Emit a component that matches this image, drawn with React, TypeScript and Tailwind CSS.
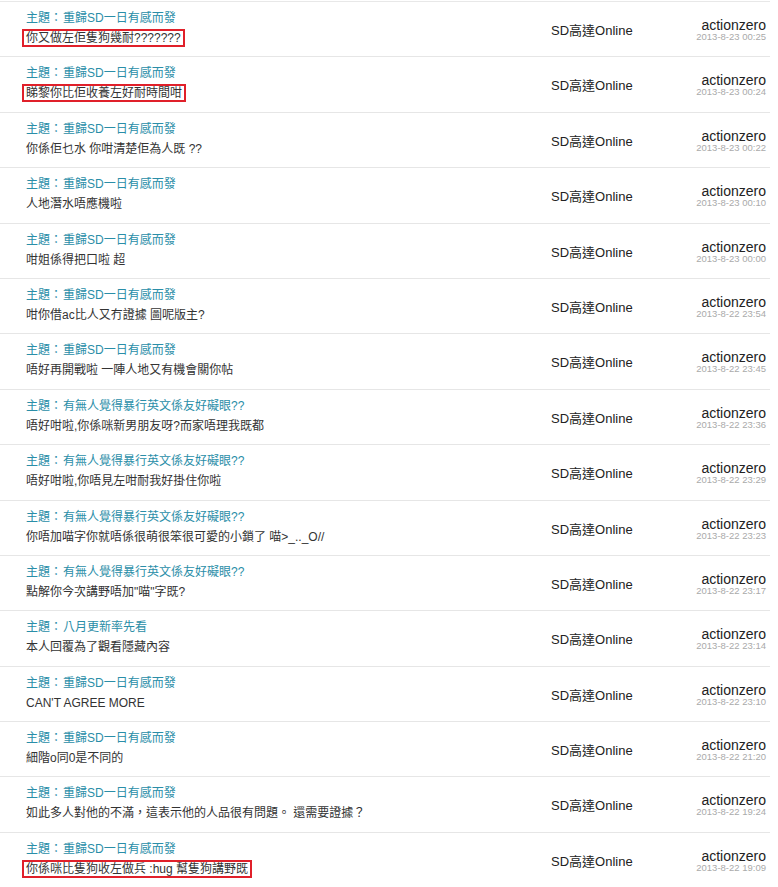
import React from "react";

type Post = {
  topic: string;
  body: string;
  date: string;
  marked?: boolean;
};

const T1 = "重歸SD一日有感而發";
const T2 = "有無人覺得暴行英文係友好礙眼??";

const posts: Post[] = [
  { topic: T1, body: "你又做左佢隻狗幾耐???????", date: "2013-8-23 00:25", marked: true },
  { topic: T1, body: "睇黎你比佢收養左好耐時間咁", date: "2013-8-23 00:24", marked: true },
  { topic: T1, body: "你係佢乜水 你咁清楚佢為人既 ??", date: "2013-8-23 00:22" },
  { topic: T1, body: "人地潛水唔應機啦", date: "2013-8-23 00:10" },
  { topic: T1, body: "咁姐係得把口啦 超", date: "2013-8-23 00:00" },
  { topic: T1, body: "咁你借ac比人又冇證據 圖呢版主?", date: "2013-8-22 23:54" },
  { topic: T1, body: "唔好再開戰啦 一陣人地又有機會關你帖", date: "2013-8-22 23:45" },
  { topic: T2, body: "唔好咁啦,你係咪新男朋友呀?而家唔理我既都", date: "2013-8-22 23:36" },
  { topic: T2, body: "唔好咁啦,你唔見左咁耐我好掛住你啦", date: "2013-8-22 23:29" },
  { topic: T2, body: "你唔加喵字你就唔係很萌很笨很可愛的小鎖了 喵>_.._O//", date: "2013-8-22 23:23" },
  { topic: T2, body: "點解你今次講野唔加\"喵\"字既?", date: "2013-8-22 23:17" },
  { topic: "八月更新率先看", body: "本人回覆為了觀看隱藏內容", date: "2013-8-22 23:14" },
  { topic: T1, body: "CAN'T AGREE MORE", date: "2013-8-22 23:10" },
  { topic: T1, body: "細階o同0是不同的", date: "2013-8-22 21:20" },
  { topic: T1, body: "如此多人對他的不滿，這表示他的人品很有問題。 還需要證據？", date: "2013-8-22 19:24" },
  { topic: T1, body: "你係咪比隻狗收左做兵 :hug 幫隻狗講野既", date: "2013-8-22 19:09", marked: true },
];

const font = { fontFamily: '"Liberation Sans", Arial, "Noto Sans CJK TC", sans-serif' };

export default function App() {
  return (
    <div className="min-h-screen bg-white overflow-hidden" style={font}>
      <div className="w-[770px] mt-px border-t border-[#e8e8e8]">
        {posts.map((p, i) => (
          <div key={i} className="flex h-[55.4px] border-b border-[#e6e6e6]">
            {/* 主題 + 內容 */}
            <div className="w-[551px] shrink-0 pl-[26px] pt-[9px]">
              <div className="text-[12px] leading-[14px] text-[#2a8ea8]">
                主題：<span className="ml-px">{p.topic}</span>
              </div>
              <div className="mt-[6px] text-[12px] leading-[14px] text-[#333]">
                {p.marked ? (
                  <span className="inline-block -ml-[4px] -my-[2px] border-2 border-[#e0202a] px-[2px]">
                    {p.body}
                  </span>
                ) : (
                  p.body
                )}
              </div>
            </div>

            {/* 版塊 */}
            <div className="flex-1 pt-[21px] text-[13px] leading-[16px] text-[#222]">
              SD高達Online
            </div>

            {/* 作者 / 時間 */}
            <div className="w-[100px] shrink-0 pr-[4px] pt-[16px] text-right">
              <div className="text-[14px] leading-[14px] text-[#222]">actionzero</div>
              <div className="text-[9.5px] leading-[10px] text-[#aaa]">{p.date}</div>
            </div>
          </div>
        ))}
      </div>
    </div>
  );
}
